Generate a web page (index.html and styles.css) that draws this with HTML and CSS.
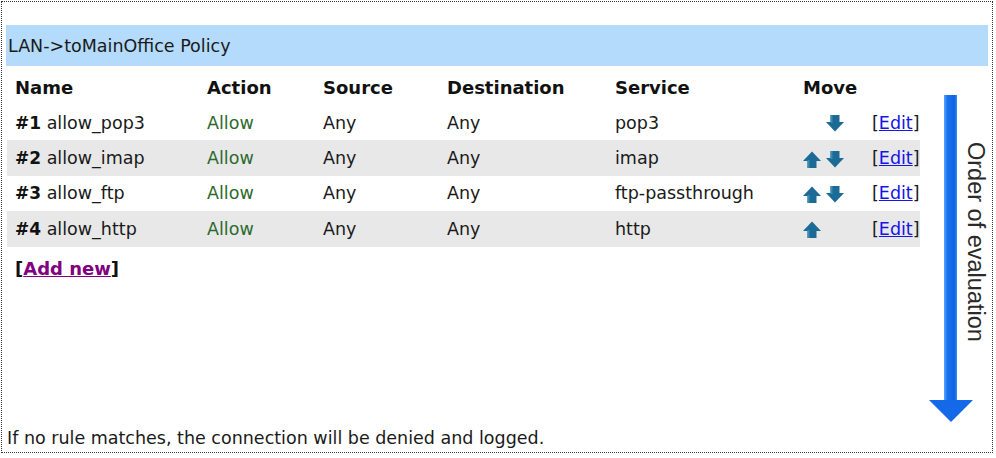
FILE: index.html
```html
<!DOCTYPE html>
<html>
<head>
<meta charset="utf-8">
<link rel="stylesheet" href="styles.css">
</head>
<body>
<div class="frame">
  <div class="policy-bar">LAN-&gt;toMainOffice Policy</div>
  <div class="main">
    <div class="rules">
      <table class="rule-table">
        <colgroup>
          <col class="c-name"><col class="c-action"><col class="c-src"><col class="c-dst"><col class="c-svc"><col class="c-move"><col class="c-edit">
        </colgroup>
        <thead>
          <tr><th>Name</th><th>Action</th><th>Source</th><th>Destination</th><th>Service</th><th>Move</th><th></th></tr>
        </thead>
        <tbody>
          <tr>
            <td><b>#1</b> allow_pop3</td><td class="allow">Allow</td><td>Any</td><td>Any</td><td>pop3</td>
            <td><span class="slot"></span><span class="slot"><svg class="mv" viewBox="0 0 18 17"><rect x="4.5" y="0" width="9" height="8" fill="#1b6b96"/><polygon points="0,7 18,7 9,16.5" fill="#1b6b96"/><rect x="4.5" y="0" width="2" height="8" fill="#3d8ab5"/></svg></span></td>
            <td>[<a href="#" class="edit">Edit</a>]</td>
          </tr>
          <tr class="alt">
            <td><b>#2</b> allow_imap</td><td class="allow">Allow</td><td>Any</td><td>Any</td><td>imap</td>
            <td><span class="slot"><svg class="mv" viewBox="0 0 18 17"><rect x="4.5" y="9" width="9" height="8" fill="#1b6b96"/><polygon points="0,10 18,10 9,0.5" fill="#1b6b96"/><rect x="4.5" y="9" width="2" height="8" fill="#3d8ab5"/></svg></span><span class="slot"><svg class="mv" viewBox="0 0 18 17"><rect x="4.5" y="0" width="9" height="8" fill="#1b6b96"/><polygon points="0,7 18,7 9,16.5" fill="#1b6b96"/><rect x="4.5" y="0" width="2" height="8" fill="#3d8ab5"/></svg></span></td>
            <td>[<a href="#" class="edit">Edit</a>]</td>
          </tr>
          <tr>
            <td><b>#3</b> allow_ftp</td><td class="allow">Allow</td><td>Any</td><td>Any</td><td>ftp-passthrough</td>
            <td><span class="slot"><svg class="mv" viewBox="0 0 18 17"><rect x="4.5" y="9" width="9" height="8" fill="#1b6b96"/><polygon points="0,10 18,10 9,0.5" fill="#1b6b96"/><rect x="4.5" y="9" width="2" height="8" fill="#3d8ab5"/></svg></span><span class="slot"><svg class="mv" viewBox="0 0 18 17"><rect x="4.5" y="0" width="9" height="8" fill="#1b6b96"/><polygon points="0,7 18,7 9,16.5" fill="#1b6b96"/><rect x="4.5" y="0" width="2" height="8" fill="#3d8ab5"/></svg></span></td>
            <td>[<a href="#" class="edit">Edit</a>]</td>
          </tr>
          <tr class="alt">
            <td><b>#4</b> allow_http</td><td class="allow">Allow</td><td>Any</td><td>Any</td><td>http</td>
            <td><span class="slot"><svg class="mv" viewBox="0 0 18 17"><rect x="4.5" y="9" width="9" height="8" fill="#1b6b96"/><polygon points="0,10 18,10 9,0.5" fill="#1b6b96"/><rect x="4.5" y="9" width="2" height="8" fill="#3d8ab5"/></svg></span><span class="slot"></span></td>
            <td>[<a href="#" class="edit">Edit</a>]</td>
          </tr>
        </tbody>
      </table>
      <div class="add-row">[<a href="#" class="add">Add new</a>]</div>
    </div>
    <div class="order">
      <svg class="order-arrow" viewBox="0 0 44 327" width="44" height="327">
        <defs>
          <linearGradient id="barg" x1="0" x2="1" y1="0" y2="0">
            <stop offset="0" stop-color="#5aa6ff"/>
            <stop offset="0.25" stop-color="#1a73f0"/>
            <stop offset="0.8" stop-color="#0f63e0"/>
            <stop offset="1" stop-color="#3c8cf5"/>
          </linearGradient>
        </defs>
        <rect x="15" y="0" width="13" height="306" fill="url(#barg)"/>
        <polygon points="0,305 44,305 22,327" fill="#1469e8"/>
      </svg>
      <div class="order-label">Order of evaluation</div>
    </div>
  </div>
  <div class="footer">If no rule matches, the connection will be denied and logged.</div>
</div>
</body>
</html>
```

FILE: styles.css
```css
html, body {
  margin: 0;
  padding: 0;
  background: #ffffff;
}
body {
  font-family: "DejaVu Sans", Verdana, sans-serif;
  font-size: 17.5px;
  color: #1a1a1a;
}
.frame {
  margin: 1px;
  width: 990px;
  height: 450px;
  border: 1px dotted #333;
  display: flex;
  flex-direction: column;
  box-sizing: content-box;
}
.policy-bar {
  margin: 23px 4px 0 4px;
  height: 41px;
  background: #b4dbfb;
  padding-left: 2px;
  display: flex;
  align-items: center;
  box-sizing: border-box;
}
.main {
  flex: 1;
  display: flex;
  min-height: 0;
}
.rules {
  margin-left: 5px;
  width: 913px;
  padding-top: 4px;
}
.rule-table {
  border-collapse: collapse;
  table-layout: fixed;
  width: 913px;
}
.c-name { width: 192px; }
.c-action { width: 116px; }
.c-src { width: 124px; }
.c-dst { width: 168px; }
.c-svc { width: 188px; }
.c-move { width: 69px; }
.c-edit { width: 56px; }
.rule-table th,
.rule-table td {
  height: 35px;
  padding: 0 0 0 8px;
  text-align: left;
  vertical-align: middle;
  white-space: nowrap;
}
.rule-table tbody td {
  height: 35.4px;
}
.rule-table th {
  font-weight: bold;
  font-size: 18px;
  color: #111;
}
.rule-table b {
  font-weight: bold;
  font-size: 17px;
  color: #111;
}
.rule-table tr.alt td {
  background: #e8e8e8;
}
.allow {
  color: #2e6a2e;
}
.slot {
  display: inline-block;
  width: 23px;
  height: 17px;
  vertical-align: middle;
}
.mv {
  display: block;
  width: 18px;
  height: 17px;
}
.edit {
  color: #1515e8;
  text-decoration: underline;
}
.add-row {
  margin-top: 4px;
  padding-left: 8px;
  height: 35px;
  display: flex;
  align-items: center;
  font-weight: bold;
  font-size: 18px;
  color: #111;
}
.add {
  color: #800080;
  text-decoration: underline;
}
.order {
  width: 60px;
  margin-left: 9px;
  display: grid;
  align-content: start;
}
.order-arrow {
  grid-area: 1 / 1;
  margin-top: 29px;
  display: block;
}
.order-label {
  grid-area: 1 / 1;
  justify-self: start;
  align-self: start;
  margin-top: 76px;
  margin-left: 35px;
  writing-mode: vertical-rl;
  font-family: "Liberation Sans", Arial, sans-serif;
  font-size: 23.5px;
  line-height: 23px;
  color: #2a2a2a;
}
.footer {
  height: 24px;
  padding-left: 5px;
  margin-bottom: 2px;
  display: flex;
  align-items: center;
}
```
